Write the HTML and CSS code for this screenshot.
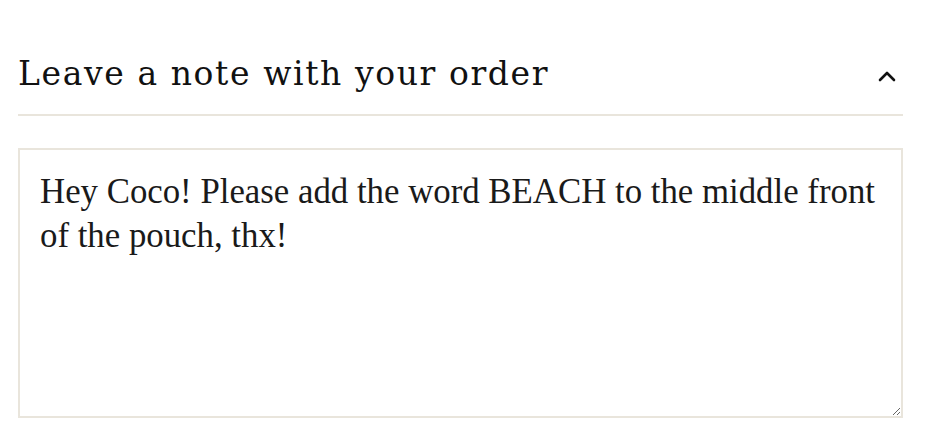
FILE: index.html
```html
<!DOCTYPE html>
<html>
<head>
<meta charset="utf-8">
<link rel="stylesheet" href="styles.css">
</head>
<body>
<section class="note">
  <div class="note-head">
    <h2 class="note-title">Leave a note with your order</h2>
    <svg class="chev" width="20" height="14" viewBox="0 0 20 14"><path d="M3 11 L10 4 L17 11" fill="none" stroke="#111" stroke-width="2.6" stroke-linecap="round" stroke-linejoin="round"/></svg>
  </div>
  <textarea class="note-input">Hey Coco! Please add the word BEACH to the middle front of the pouch, thx!</textarea>
</section>
</body>
</html>
```
FILE: styles.css
```css
html, body { margin: 0; padding: 0; background: #fff; }
.note { width: 885px; margin: 0 0 0 18px; padding-top: 48px; }
.note-head {
  display: flex;
  align-items: center;
  justify-content: space-between;
  height: 66px;
  border-bottom: 2px solid #e9e5dc;
}
.note-title {
  margin: 0;
  font-family: "DejaVu Serif", serif;
  font-weight: normal;
  font-size: 33px;
  letter-spacing: 1.6px;
  color: #111;
  padding-bottom: 16px;
}
.chev { margin-right: 6px; margin-bottom: 10px; }
.note-input {
  display: block;
  box-sizing: border-box;
  width: 100%;
  height: 270px;
  margin-top: 32px;
  border: 2px solid #e9e5dc;
  padding: 20px 20px;
  font-family: "Liberation Serif", serif;
  font-size: 34.8px;
  line-height: 44px;
  color: #1a1a1a;
  outline: none;
}
```
